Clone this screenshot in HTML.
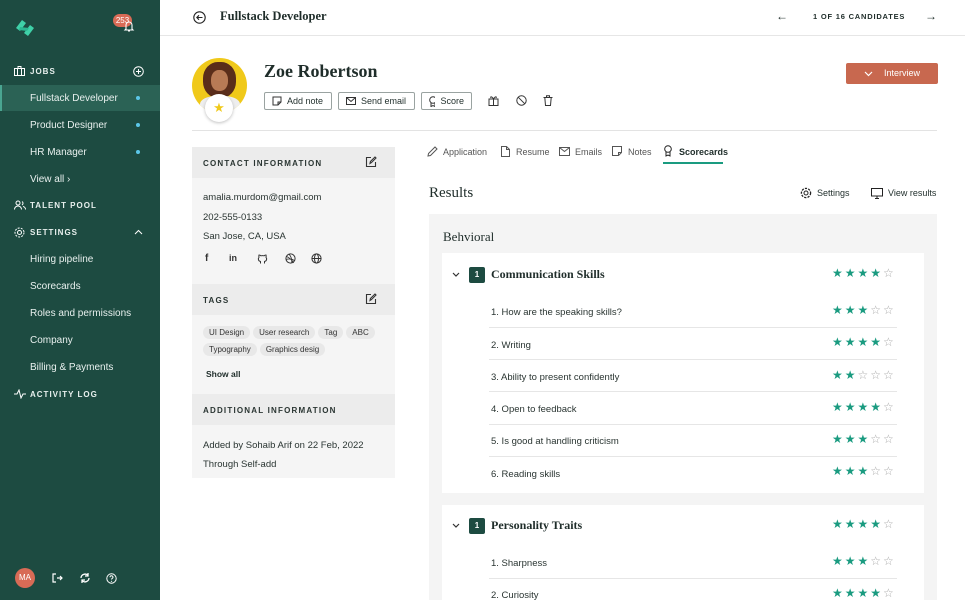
<!DOCTYPE html>
<html><head><meta charset="utf-8"><style>
*{margin:0;padding:0;box-sizing:border-box}
body{width:965px;height:600px;overflow:hidden;font-family:"Liberation Sans",sans-serif;background:#fff;color:#1f2d2a;position:relative}
.a{position:absolute}
.sb{left:0;top:0;width:160px;height:600px;background:#1d4b41}
.sb .t{position:absolute;left:30px;font-size:10px;color:#e8f0ee;white-space:nowrap}
.sb .h{position:absolute;left:30px;font-size:8px;font-weight:bold;letter-spacing:1px;color:#e8f0ee}
.dot{position:absolute;left:136px;width:4px;height:4px;border-radius:2px;background:#5cc7e8}
.serif{font-family:"Liberation Serif",serif}
.btn{position:absolute;top:92px;height:18px;border:1px solid #9aa3a1;border-radius:2px;font-size:9px;display:flex;align-items:center;padding:0 7px;gap:5px;background:#fff}
.ph{position:absolute;left:192px;width:203px;height:31px;background:#ececec;font-size:8px;font-weight:bold;letter-spacing:1.2px;padding:12px 11px;color:#2a3532}
.txt{position:absolute;font-size:9.5px;color:#2a3532;white-space:nowrap}
.tag{display:inline-block;background:#e8e8e8;border-radius:7px;font-size:8px;height:13px;line-height:13px;padding:0 6px;margin:0 3px 4px 0;color:#333;vertical-align:top}
.tab{position:absolute;top:147px;font-size:9px;color:#555;white-space:nowrap}
.stars{position:absolute;left:832px;font-size:12px;letter-spacing:2px;color:#1a9b80;white-space:nowrap}
.stars i{font-style:normal;color:#aaa}
.q{position:absolute;left:491px;font-size:9.5px;color:#2a3532}
.sep{position:absolute;left:489px;width:408px;height:1px;background:#e6e6e6}
svg{display:block}
</style></head><body>
<div class="a sb">
  <svg class="a" style="left:13px;top:16px" width="24" height="24" viewBox="0 0 24 24"><path d="M3 12 L9 4 L13 7 L7 15Z" fill="#3fd1a8"/><path d="M11 17 L17 9 L21 12 L15 20Z" fill="#3fd1a8"/><path d="M7 11 L16 12 L14 15 L6 14Z" fill="#2bb791"/></svg>
  <div class="a" style="left:113px;top:14px;width:19px;height:13px;border-radius:7px;background:#d86b56;color:#fff;font-size:8px;text-align:center;line-height:13px">253</div>
  <svg class="a" style="left:123px;top:20px" width="12" height="13" viewBox="0 0 12 13"><path d="M3 9V5a3 3 0 016 0v4l1 1H2z M5 11h2" fill="none" stroke="#fff" stroke-width="1.1"/></svg>
  <svg class="a" style="left:14px;top:66px" width="11" height="10"><rect x="0.5" y="2.5" width="10" height="7" fill="none" stroke="#fff"/><path d="M4 2.5V0.5h3v2M3.5 3v6M7.5 3v6" stroke="#fff" fill="none"/></svg>
  <div class="h" style="top:67px">JOBS</div>
  <svg class="a" style="left:133px;top:66px" width="11" height="11"><circle cx="5.5" cy="5.5" r="4.8" fill="none" stroke="#fff"/><path d="M5.5 3v5M3 5.5h5" stroke="#fff"/></svg>
  <div class="a" style="left:0;top:85px;width:160px;height:26px;background:#2b6255;border-left:2px solid #4aa591"></div>
  <div class="t" style="top:93px">Fullstack Developer</div><div class="dot" style="top:96px"></div>
  <div class="t" style="top:120px">Product Designer</div><div class="dot" style="top:123px"></div>
  <div class="t" style="top:147px">HR Manager</div><div class="dot" style="top:150px"></div>
  <div class="t" style="top:174px">View all ›</div>
  <svg class="a" style="left:14px;top:200px" width="12" height="10"><circle cx="4" cy="3" r="2" fill="none" stroke="#fff"/><path d="M0.5 9.5a3.5 3.5 0 017 0M8 1.5a2 2 0 010 3.5M9 6.5a3 3 0 012.5 3" fill="none" stroke="#fff"/></svg>
  <div class="h" style="top:201px">TALENT POOL</div>
  <svg class="a" style="left:14px;top:227px" width="11" height="11"><circle cx="5.5" cy="5.5" r="2" fill="none" stroke="#fff"/><circle cx="5.5" cy="5.5" r="4.5" fill="none" stroke="#fff" stroke-dasharray="2 1.2"/></svg>
  <div class="h" style="top:228px">SETTINGS</div>
  <svg class="a" style="left:134px;top:229px" width="9" height="6"><path d="M1 5l3.5-3.5L8 5" fill="none" stroke="#fff"/></svg>
  <div class="t" style="top:254px">Hiring pipeline</div>
  <div class="t" style="top:281px">Scorecards</div>
  <div class="t" style="top:308px">Roles and permissions</div>
  <div class="t" style="top:335px">Company</div>
  <div class="t" style="top:362px">Billing &amp; Payments</div>
  <svg class="a" style="left:14px;top:389px" width="12" height="10"><path d="M0 5h3l2-4 2 8 2-4h3" fill="none" stroke="#fff"/></svg>
  <div class="h" style="top:390px">ACTIVITY LOG</div>
  <div class="a" style="left:15px;top:568px;width:20px;height:20px;border-radius:10px;background:#d86b56;color:#fff;font-size:8px;text-align:center;line-height:20px">MA</div>
  <svg class="a" style="left:52px;top:573px" width="11" height="10"><path d="M4 1H1v8h3M5 5h5M8 3l2 2-2 2" fill="none" stroke="#fff" stroke-width="1.2"/></svg>
  <svg class="a" style="left:79px;top:572px" width="12" height="12"><path d="M2 6a4 4 0 017-2.5M10 6a4 4 0 01-7 2.5M9 1v3H6M3 11V8h3" fill="none" stroke="#fff" stroke-width="1.3"/></svg>
  <svg class="a" style="left:106px;top:573px" width="11" height="11"><circle cx="5.5" cy="5.5" r="4.7" fill="none" stroke="#fff"/><path d="M4 4.3a1.5 1.5 0 113 0c0 1-1.5 1-1.5 2.2" fill="none" stroke="#fff"/><circle cx="5.5" cy="8.3" r=".6" fill="#fff"/></svg>
</div>

<div class="a" style="left:160px;top:35px;width:805px;height:1px;background:#e6e6e6"></div>
<svg class="a" style="left:193px;top:11px" width="13" height="13"><circle cx="6.5" cy="6.5" r="5.7" fill="none" stroke="#222" stroke-width="1.1"/><path d="M9.5 6.5H4M6 4.3L3.8 6.5 6 8.7" fill="none" stroke="#222" stroke-width="1.1"/></svg>
<div class="a serif" style="left:220px;top:9px;font-size:12.5px;font-weight:bold">Fullstack Developer</div>
<div class="a" style="left:776px;top:9px;font-size:12px">←</div>
<div class="a" style="left:813px;top:12px;font-size:7.5px;font-weight:bold;letter-spacing:.8px">1 OF 16 CANDIDATES</div>
<div class="a" style="left:925px;top:9px;font-size:12px">→</div>

<div class="a" style="left:192px;top:58px;width:55px;height:55px;border-radius:50%;background:#f0c91a;overflow:hidden">
  <div class="a" style="left:11px;top:4px;width:33px;height:36px;border-radius:45%;background:#5a2d1a"></div>
  <div class="a" style="left:19px;top:12px;width:17px;height:21px;border-radius:45%;background:#b87a55"></div>
  <div class="a" style="left:8px;top:38px;width:40px;height:20px;border-radius:40% 40% 0 0;background:#eee"></div>
</div>
<div class="a" style="left:205px;top:94px;width:28px;height:28px;border-radius:50%;background:#fff;box-shadow:0 1px 3px rgba(0,0,0,.25);color:#f0c91a;text-align:center;line-height:28px;font-size:13px">★</div>
<div class="a serif" style="left:264px;top:61px;font-size:18px;font-weight:bold;color:#1f2d2a">Zoe Robertson</div>
<div class="btn" style="left:264px;width:68px"><svg width="10" height="10"><path d="M1 1h8v5L6 9H1z M6 9V6h3" fill="none" stroke="#333"/></svg>Add note</div>
<div class="btn" style="left:338px;width:77px"><svg width="10" height="8"><rect x=".5" y=".5" width="9" height="7" fill="none" stroke="#333"/><path d="M.5 .5l4.5 4 4.5-4" fill="none" stroke="#333"/></svg>Send email</div>
<div class="btn" style="left:421px;width:51px"><svg width="8" height="11"><circle cx="4" cy="4" r="3.3" fill="none" stroke="#333"/><path d="M2 7v3.5l2-1 2 1V7" fill="none" stroke="#333"/></svg>Score</div>
<svg class="a" style="left:488px;top:95px" width="11" height="11"><rect x="1" y="4" width="9" height="6.5" fill="none" stroke="#333"/><path d="M.5 4h10M5.5 4v6.5M5.5 4C4 1 2 1.5 3 3M5.5 4C7 1 9 1.5 8 3" fill="none" stroke="#333"/></svg>
<svg class="a" style="left:516px;top:95px" width="11" height="11"><circle cx="5.5" cy="5.5" r="4.7" fill="none" stroke="#333"/><path d="M2.2 2.2l6.6 6.6" stroke="#333"/></svg>
<svg class="a" style="left:543px;top:95px" width="10" height="11"><path d="M.5 2.5h9M3.5 2.5V.8h3v1.7M1.8 2.5l.7 8h5l.7-8" fill="none" stroke="#333"/></svg>
<div class="a" style="left:846px;top:63px;width:92px;height:21px;background:#c8684f;border-radius:2px;color:#fff;font-size:9px;line-height:21px;padding-left:38px">Interview</div>
<svg class="a" style="left:864px;top:71px" width="9" height="6"><path d="M1 1l3.5 3.5L8 1" fill="none" stroke="#fff" stroke-width="1.2"/></svg>
<div class="a" style="left:192px;top:130px;width:745px;height:1px;background:#e3e3e3"></div>

<div class="a" style="left:192px;top:147px;width:203px;height:331px;background:#f5f5f5"></div>
<div class="ph" style="top:147px">CONTACT INFORMATION</div>
<div class="ph" style="top:284px">TAGS</div>
<div class="ph" style="top:394px">ADDITIONAL INFORMATION</div>
<svg class="a" style="left:365px;top:156px" width="12" height="12"><path d="M6 1.5H1.5v9h9V6M5 7.5l.4-2L10 1l1 1-4.6 4.6z" fill="none" stroke="#333" stroke-width="1.1"/></svg>
<svg class="a" style="left:365px;top:293px" width="12" height="12"><path d="M6 1.5H1.5v9h9V6M5 7.5l.4-2L10 1l1 1-4.6 4.6z" fill="none" stroke="#333" stroke-width="1.1"/></svg>
<div class="txt" style="left:203px;top:192px">amalia.murdom@gmail.com</div>
<div class="txt" style="left:203px;top:212px">202-555-0133</div>
<div class="txt" style="left:203px;top:231px">San Jose, CA, USA</div>
<div class="a" style="left:205px;top:253px;font-size:10px;font-weight:bold;color:#333">f</div>
<div class="a" style="left:229px;top:253px;font-size:9px;font-weight:bold;color:#333">in</div>
<svg class="a" style="left:257px;top:253px" width="11" height="11"><path d="M3.5 10.5V8.5C1 8 1 5.5 2 4.3 1.6 3 2 2 2 2c1 0 2 .8 2 .8a5 5 0 013 0S8 2 9 2c0 0 .4 1 0 2.3 1 1.2 1 3.7-1.5 4.2v2" fill="none" stroke="#333"/></svg>
<svg class="a" style="left:285px;top:253px" width="11" height="11"><circle cx="5.5" cy="5.5" r="4.6" fill="none" stroke="#333"/><path d="M1.5 3.5c3 1 6 4 7 6.5M1 6.5c3-1 6-.5 8.5 1M4 1.2c2 2 3 5 2.8 9" fill="none" stroke="#333" stroke-width=".9"/></svg>
<svg class="a" style="left:311px;top:253px" width="11" height="11"><circle cx="5.5" cy="5.5" r="4.6" fill="none" stroke="#333"/><ellipse cx="5.5" cy="5.5" rx="2" ry="4.6" fill="none" stroke="#333"/><path d="M1 5.5h9" stroke="#333"/></svg>
<div class="a" style="left:203px;top:326px;width:190px;line-height:0">
<span class="tag">UI Design</span><span class="tag">User research</span><span class="tag">Tag</span><span class="tag">ABC</span><br><span class="tag">Typography</span><span class="tag">Graphics desig</span></div>
<div class="a" style="left:206px;top:369px;font-size:8.5px;font-weight:bold">Show all</div>
<div class="txt" style="left:203px;top:440px">Added by Sohaib Arif on 22 Feb, 2022</div>
<div class="txt" style="left:203px;top:459px">Through Self-add</div>

<svg class="a" style="left:427px;top:146px" width="11" height="11"><path d="M1 10l.5-2.5L8 1l2 2-6.5 6.5z" fill="none" stroke="#555"/></svg>
<div class="tab" style="left:443px">Application</div>
<svg class="a" style="left:501px;top:146px" width="9" height="11"><path d="M.5 .5h5l3 3v7h-8z M5.5 .5v3h3" fill="none" stroke="#555"/></svg>
<div class="tab" style="left:516px">Resume</div>
<svg class="a" style="left:559px;top:147px" width="11" height="9"><rect x=".5" y=".5" width="10" height="8" fill="none" stroke="#555"/><path d="M.5 .5l5 4 5-4" fill="none" stroke="#555"/></svg>
<div class="tab" style="left:575px">Emails</div>
<svg class="a" style="left:612px;top:146px" width="10" height="10"><path d="M.5 .5h9v6l-3 3h-6z M6.5 9.5v-3h3" fill="none" stroke="#555"/></svg>
<div class="tab" style="left:628px">Notes</div>
<svg class="a" style="left:664px;top:145px" width="8" height="12"><circle cx="4" cy="4" r="3.3" fill="none" stroke="#222"/><path d="M2 7v4l2-1 2 1V7" fill="none" stroke="#222"/></svg>
<div class="tab" style="left:679px;color:#1f2d2a;font-weight:bold">Scorecards</div>
<div class="a" style="left:663px;top:162px;width:60px;height:2px;background:#1a9b80"></div>

<div class="a serif" style="left:429px;top:185px;font-size:15px">Results</div>
<svg class="a" style="left:800px;top:187px" width="12" height="12"><circle cx="6" cy="6" r="2" fill="none" stroke="#222"/><circle cx="6" cy="6" r="4.6" fill="none" stroke="#222" stroke-dasharray="2.2 1.2" stroke-width="1.3"/></svg>
<div class="a" style="left:817px;top:188px;font-size:9px">Settings</div>
<svg class="a" style="left:871px;top:188px" width="12" height="11"><rect x=".5" y=".5" width="11" height="7.5" fill="none" stroke="#222"/><path d="M4 10.5h4M6 8v2.5" stroke="#222"/></svg>
<div class="a" style="left:888px;top:188px;font-size:9px">View results</div>

<div class="a" style="left:429px;top:214px;width:508px;height:386px;background:#f4f4f4"></div>
<div class="a serif" style="left:443px;top:229px;font-size:13px">Behvioral</div>
<div class="a" style="left:442px;top:253px;width:482px;height:240px;background:#fff"></div>
<div class="a" style="left:442px;top:505px;width:482px;height:95px;background:#fff"></div>

<svg class="a" style="left:452px;top:272px" width="8" height="5"><path d="M1 1l3 3 3-3" fill="none" stroke="#333" stroke-width="1.2"/></svg>
<div class="a" style="left:469px;top:267px;width:16px;height:16px;background:#1d4b41;border-radius:2px;color:#fff;font-size:8px;font-weight:bold;text-align:center;line-height:16px">1</div>
<div class="a serif" style="left:491px;top:267px;font-size:12px;font-weight:bold">Communication Skills</div>
<div class="stars" style="top:266px">★★★★<i>☆</i></div>

<div class="q" style="top:307px">1. How are the speaking skills?</div><div class="stars" style="top:303px">★★★<i>☆☆</i></div><div class="sep" style="top:327px"></div>
<div class="q" style="top:340px">2. Writing</div><div class="stars" style="top:335px">★★★★<i>☆</i></div><div class="sep" style="top:359px"></div>
<div class="q" style="top:372px">3. Ability to present confidently</div><div class="stars" style="top:368px">★★<i>☆☆☆</i></div><div class="sep" style="top:391px"></div>
<div class="q" style="top:404px">4. Open to feedback</div><div class="stars" style="top:400px">★★★★<i>☆</i></div><div class="sep" style="top:424px"></div>
<div class="q" style="top:436px">5. Is good at handling criticism</div><div class="stars" style="top:432px">★★★<i>☆☆</i></div><div class="sep" style="top:456px"></div>
<div class="q" style="top:469px">6. Reading skills</div><div class="stars" style="top:464px">★★★<i>☆☆</i></div>

<svg class="a" style="left:452px;top:523px" width="8" height="5"><path d="M1 1l3 3 3-3" fill="none" stroke="#333" stroke-width="1.2"/></svg>
<div class="a" style="left:469px;top:518px;width:16px;height:16px;background:#1d4b41;border-radius:2px;color:#fff;font-size:8px;font-weight:bold;text-align:center;line-height:16px">1</div>
<div class="a serif" style="left:491px;top:518px;font-size:12px;font-weight:bold">Personality Traits</div>
<div class="stars" style="top:517px">★★★★<i>☆</i></div>
<div class="q" style="top:558px">1. Sharpness</div><div class="stars" style="top:554px">★★★<i>☆☆</i></div><div class="sep" style="top:578px"></div>
<div class="q" style="top:590px">2. Curiosity</div><div class="stars" style="top:586px">★★★★<i>☆</i></div>
</body></html>
